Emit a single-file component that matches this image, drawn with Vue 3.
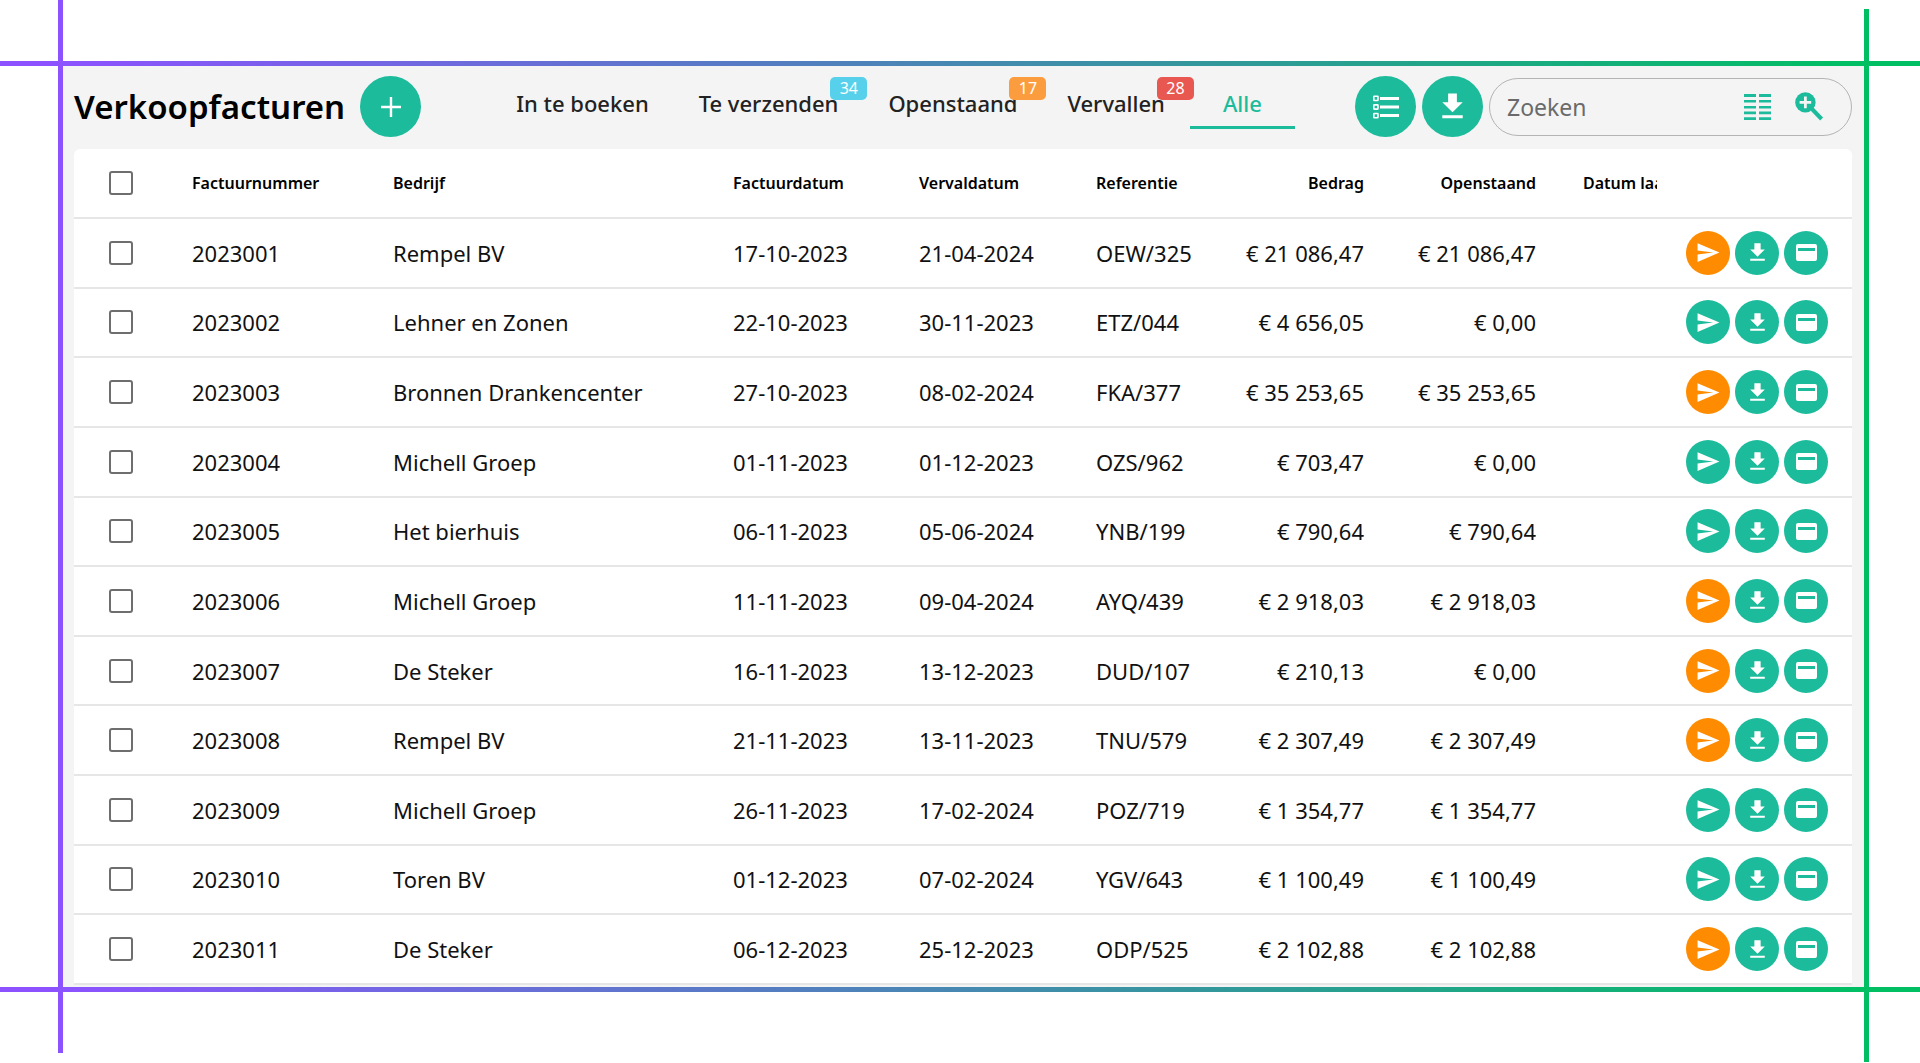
<script setup>
import { ref } from 'vue'

const tabs = [
  { label: 'In te boeken' },
  { label: 'Te verzenden', count: 34, tone: 'blue' },
  { label: 'Openstaand', count: 17, tone: 'orange' },
  { label: 'Vervallen', count: 28, tone: 'red' },
  { label: 'Alle', active: true },
]

const search = ref('')

const invoices = [
  ['2023001', 'Rempel BV', '17-10-2023', '21-04-2024', 'OEW/325', '€ 21 086,47', '€ 21 086,47', true],
  ['2023002', 'Lehner en Zonen', '22-10-2023', '30-11-2023', 'ETZ/044', '€ 4 656,05', '€ 0,00', false],
  ['2023003', 'Bronnen Drankencenter', '27-10-2023', '08-02-2024', 'FKA/377', '€ 35 253,65', '€ 35 253,65', true],
  ['2023004', 'Michell Groep', '01-11-2023', '01-12-2023', 'OZS/962', '€ 703,47', '€ 0,00', false],
  ['2023005', 'Het bierhuis', '06-11-2023', '05-06-2024', 'YNB/199', '€ 790,64', '€ 790,64', false],
  ['2023006', 'Michell Groep', '11-11-2023', '09-04-2024', 'AYQ/439', '€ 2 918,03', '€ 2 918,03', true],
  ['2023007', 'De Steker', '16-11-2023', '13-12-2023', 'DUD/107', '€ 210,13', '€ 0,00', true],
  ['2023008', 'Rempel BV', '21-11-2023', '13-11-2023', 'TNU/579', '€ 2 307,49', '€ 2 307,49', true],
  ['2023009', 'Michell Groep', '26-11-2023', '17-02-2024', 'POZ/719', '€ 1 354,77', '€ 1 354,77', false],
  ['2023010', 'Toren BV', '01-12-2023', '07-02-2024', 'YGV/643', '€ 1 100,49', '€ 1 100,49', false],
  ['2023011', 'De Steker', '06-12-2023', '25-12-2023', 'ODP/525', '€ 2 102,88', '€ 2 102,88', true],
].map(([number, company, date, due, reference, amount, open, pending]) => ({
  number, company, date, due, reference, amount, open, pending,
}))
</script>

<template>
  <div class="page">
    <main class="panel">
      <header class="toolbar">
        <h1 class="title">Verkoopfacturen</h1>
        <button class="round" type="button" aria-label="Nieuwe factuur">
          <svg width="20" height="20" viewBox="0 0 20 20"><path d="M8.8 0h2.4v8.8H20v2.4h-8.8V20H8.8v-8.8H0V8.8h8.8z" /></svg>
        </button>
        <nav class="tabs">
          <a v-for="tab in tabs" :key="tab.label" href="#" class="tab" :class="{ active: tab.active }">
            <span class="tab-text">{{ tab.label }}<span v-if="tab.count" class="badge" :class="tab.tone">{{ tab.count }}</span></span>
          </a>
        </nav>
        <div class="tools">
          <button class="round" type="button" aria-label="Lijst">
            <svg width="26" height="24" viewBox="0 0 26 24">
              <path d="M7 2h19v3H7zM7 10.500h19v3H7zM7 19h19v3H7z" />
              <g fill="none" stroke="#fff" stroke-width="1.6">
                <rect x=".8" y="1.3" width="4.2" height="4.2" rx=".5" />
                <rect x=".8" y="9.9" width="4.2" height="4.2" rx=".5" />
                <rect x=".8" y="18.5" width="4.2" height="4.2" rx=".5" />
              </g>
            </svg>
          </button>
          <button class="round" type="button" aria-label="Downloaden">
            <svg width="35" height="35" viewBox="0 0 24 24"><path d="M19 9h-4V3H9v6H5l7 7 7-7zM5 18v2h14v-2H5z" /></svg>
          </button>
          <form class="search" @submit.prevent>
            <input v-model="search" type="text" placeholder="Zoeken" aria-label="Zoeken">
            <button class="plain" type="button" aria-label="Kolommen">
              <svg width="27" height="26" viewBox="0 0 27 26">
                <path d="M0 0h12v3H0zM15 0h12v3H15zM0 6h12v2.6H0zM15 6h12v2.6H15zM0 12h12v2.4H0zM15 12h12v2.4H15zM0 17.6h12v2.6H0zM15 17.6h12v2.6H15zM0 23.3h12V26H0zM15 23.3h12V26H15z" />
              </svg>
            </button>
            <button class="plain" type="button" aria-label="Uitgebreid zoeken">
              <svg width="29" height="29" viewBox="0 0 29 29">
                <circle cx="10.4" cy="10.4" r="10.2" />
                <path d="M17 17l9.6 10" fill="none" stroke="#1cbb9c" stroke-width="4" />
                <path d="M10.4 4.6v11.6M4.6 10.4h11.6" fill="none" stroke="#f4f4f4" stroke-width="2.8" />
              </svg>
            </button>
          </form>
        </div>
      </header>

      <table class="grid">
        <colgroup>
          <col class="w-check"><col class="w-number"><col><col class="w-date"><col class="w-due">
          <col class="w-ref"><col class="w-amount"><col class="w-open"><col class="w-last"><col class="w-actions">
        </colgroup>
        <thead>
          <tr>
            <th class="check"><input type="checkbox" aria-label="Alles selecteren"></th>
            <th>Factuurnummer</th>
            <th>Bedrijf</th>
            <th>Factuurdatum</th>
            <th>Vervaldatum</th>
            <th>Referentie</th>
            <th class="num">Bedrag</th>
            <th class="num">Openstaand</th>
            <th class="last"><div class="clip">Datum laatste</div></th>
            <th></th>
          </tr>
        </thead>
        <tbody>
          <tr v-for="row in invoices" :key="row.number">
            <td class="check"><input type="checkbox" :aria-label="row.number"></td>
            <td>{{ row.number }}</td>
            <td>{{ row.company }}</td>
            <td>{{ row.date }}</td>
            <td>{{ row.due }}</td>
            <td>{{ row.reference }}</td>
            <td class="num">{{ row.amount }}</td>
            <td class="num">{{ row.open }}</td>
            <td></td>
            <td>
              <div class="actions">
                <button class="round small" :class="{ pending: row.pending }" type="button" aria-label="Verzenden">
                  <svg width="25" height="25" viewBox="0.5 0 24 24"><path d="M2.01 21L23 12 2.01 3 2 10l15 2-15 2z" /></svg>
                </button>
                <button class="round small" type="button" aria-label="Downloaden">
                  <svg width="25" height="25" viewBox="0 0 24 24"><path d="M19 9h-4V3H9v6H5l7 7 7-7zM5 18v2h14v-2H5z" /></svg>
                </button>
                <button class="round small" type="button" aria-label="Betaling">
                  <svg width="21" height="17" viewBox="0 0 21 17"><path fill-rule="evenodd" d="M2 0h17a2 2 0 0 1 2 2v13a2 2 0 0 1-2 2H2a2 2 0 0 1-2-2V2a2 2 0 0 1 2-2zM2 4v3h17V4z" /></svg>
                </button>
              </div>
            </td>
          </tr>
        </tbody>
      </table>
    </main>

    <i class="rule across top"></i>
    <i class="rule across bottom"></i>
    <i class="rule down left"></i>
    <i class="rule down right"></i>
  </div>
</template>

<style>
body {
  margin: 0;
  background: #fff;
}
</style>

<style scoped>
.page {
  position: relative;
  box-sizing: border-box;
  min-height: 100vh;
  padding: 64px 53px 73px 61px;
  display: flex;
  font-family: "Noto Sans", "Open Sans", sans-serif;
  color: #111;
}

.panel {
  flex: 1;
  min-width: 0;
  display: flex;
  flex-direction: column;
  padding: 0 15px 5px 13px;
  background: #f4f4f4;
}

.toolbar {
  display: flex;
  align-items: center;
  height: 85px;
}

.title {
  margin: 0 15px 0 0;
  font-size: 33px;
  font-weight: 600;
  line-height: 40px;
  color: #000;
}

.round {
  display: flex;
  align-items: center;
  justify-content: center;
  flex: none;
  width: 61px;
  height: 61px;
  padding: 0;
  border: 0;
  border-radius: 50%;
  background: #1cbb9c;
  fill: #fff;
}

.round.small {
  width: 44px;
  height: 44px;
}

.round.pending {
  background: #ff8c00;
}

.tabs {
  display: flex;
  align-self: flex-start;
  margin: 15px auto 0 70px;
}

.tab {
  display: flex;
  align-items: center;
  justify-content: center;
  box-sizing: border-box;
  min-width: 105px;
  height: 50px;
  padding: 0 25px;
  border-bottom: 3px solid transparent;
  font-size: 22px;
  font-weight: 500;
  line-height: 30px;
  color: #222;
  text-decoration: none;
  white-space: nowrap;
}

.tab.active {
  border-color: #1cbb9c;
  color: #1cbb9c;
}

.tab-text {
  position: relative;
}

.badge {
  position: absolute;
  left: calc(100% - 8px);
  top: -11px;
  width: 37px;
  border-radius: 5px;
  font-size: 16px;
  font-weight: 400;
  line-height: 23px;
  text-align: center;
  color: #fff;
}

.blue { background: #57d1eb; }
.orange { background: #fb9d3f; }
.red { background: #e95850; }

.tools {
  display: flex;
  align-items: center;
  gap: 6px;
}

.search {
  display: flex;
  align-items: center;
  gap: 24px;
  box-sizing: border-box;
  width: 363px;
  height: 58px;
  padding: 0 27px 0 17px;
  border: 1px solid #b4b4b4;
  border-radius: 29px;
}

.search input {
  flex: 1;
  min-width: 0;
  padding: 0;
  border: 0;
  outline: 0;
  background: none;
  font: inherit;
  font-size: 23px;
  color: #222;
}

.search input::placeholder {
  color: #6a6a6a;
}

.plain {
  display: flex;
  padding: 0;
  border: 0;
  background: none;
  fill: #1cbb9c;
}

.grid {
  flex: 1;
  width: 100%;
  table-layout: fixed;
  border-collapse: separate;
  border-spacing: 0;
  border-radius: 6px 6px 0 0;
  background: #fff;
}

.w-check { width: 118px; }
.w-number { width: 201px; }
.w-date { width: 186px; }
.w-due { width: 177px; }
.w-ref,
.w-amount { width: 134px; }
.w-open { width: 172px; }
.w-last { width: 122px; }
.w-actions { width: 194px; }

th,
td {
  padding: 0;
  border-bottom: 2px solid #e6e6e6;
  text-align: left;
  white-space: nowrap;
}

th {
  height: 68px;
  font-size: 16px;
  font-weight: 600;
  line-height: 24px;
  color: #000;
}

td {
  height: 67px;
  font-size: 22px;
  line-height: 30px;
}

.num {
  text-align: right;
}

.check {
  padding-left: 35px;
}

.check input {
  display: block;
  appearance: none;
  box-sizing: border-box;
  width: 24px;
  height: 24px;
  margin: 0;
  border: 2px solid #6e6e6e;
  border-radius: 3px;
}

.last {
  padding: 0 1px 0 47px;
}

.clip {
  overflow: hidden;
}

.actions {
  display: flex;
  justify-content: flex-end;
  gap: 5px;
  padding-right: 24px;
}

.rule {
  position: absolute;
}

.across {
  left: 0;
  right: 0;
  height: 5px;
  background: linear-gradient(90deg, #8c52ff 3%, #00bf63 97%);
}

.top { top: 61px; }
.bottom { bottom: 71px; }

.down {
  width: 5px;
}

.left {
  left: 58px;
  top: 0;
  bottom: 10px;
  background: #8c52ff;
}

.right {
  right: 51px;
  top: 9px;
  bottom: 1px;
  background: #00bf63;
}
</style>
